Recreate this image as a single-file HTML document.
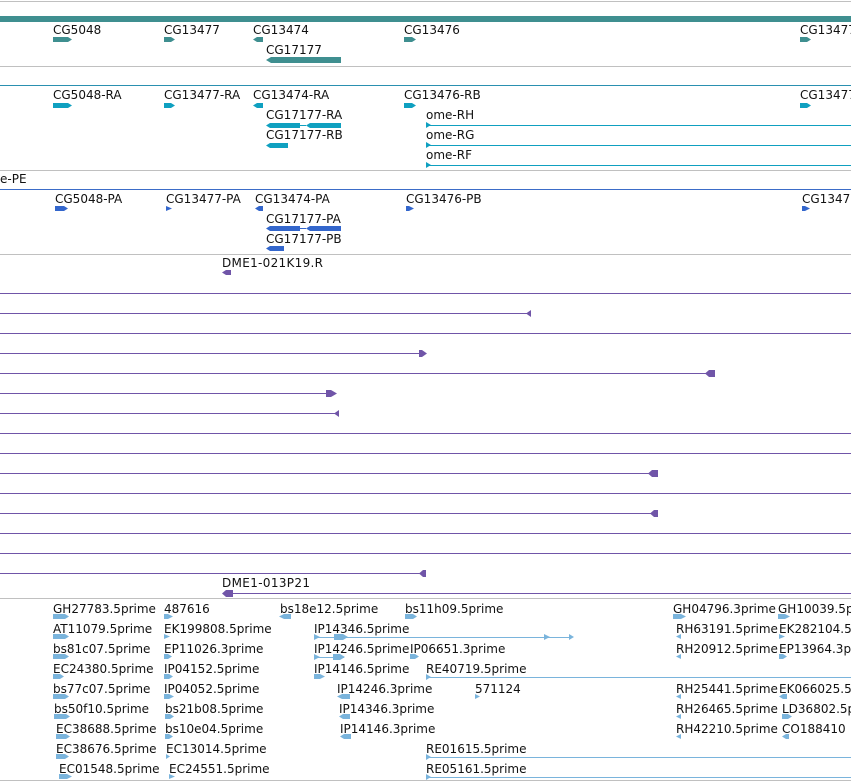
<!DOCTYPE html>
<html><head><meta charset="utf-8"><style>
html,body{margin:0;padding:0;background:#fff;width:851px;height:782px;overflow:hidden}
svg{display:block}
text{font-family:"DejaVu Sans","Liberation Sans",sans-serif;font-size:12px;fill:#111}
</style></head><body>
<svg width="851" height="782" viewBox="0 0 851 782" xmlns="http://www.w3.org/2000/svg">
<g fill="#c0c0c0">
<rect x="0" y="1" width="851" height="1"/>
<rect x="0" y="66" width="851" height="1"/>
<rect x="0" y="170" width="851" height="1"/>
<rect x="0" y="254" width="851" height="1"/>
<rect x="0" y="598" width="851" height="1"/>
<rect x="0" y="780" width="851" height="1"/>
</g>

<g fill="#3f8f90">
<rect x="0" y="16" width="851" height="6"/>
<polygon points="53,37 68,37 72,39.5 68,42 53,42"/>
<polygon points="164,37 171,37 175,39.5 171,42 164,42"/>
<polygon points="263,37 257,37 253,39.5 257,42 263,42"/>
<polygon points="404,37 412,37 416,39.5 412,42 404,42"/>
<polygon points="800,37 807,37 811,39.5 807,42 800,42"/>
<polygon points="341,57 271,57 266,60 271,63 341,63"/>
</g>
<text x="53" y="34">CG5048</text>
<text x="164" y="34">CG13477</text>
<text x="253" y="34">CG13474</text>
<text x="404" y="34">CG13476</text>
<text x="800" y="34">CG13477</text>
<text x="266" y="54">CG17177</text>

<rect x="0" y="85" width="851" height="1" fill="#2a90b0"/>
<g fill="#0fa0c0">
<rect x="53" y="103" width="15" height="5"/><polygon points="68,103 72,105.5 68,108"/>
<polygon points="164,103 171,103 175,105.5 171,108 164,108"/>
<polygon points="263,103 257,103 253,105.5 257,108 263,108"/>
<polygon points="404,103 412,103 416,105.5 412,108 404,108"/>
<polygon points="800,103 807,103 811,105.5 807,108 800,108"/>
<polygon points="300,123 270,123 266,125.5 270,128 300,128"/>
<rect x="300" y="125" width="6" height="1"/>
<polygon points="341,123 310,123 306,125.5 310,128 341,128"/>
<polygon points="288,143 270,143 266,145.5 270,148 288,148"/>
<rect x="426" y="125" width="425" height="1"/><polygon points="426,122 431,125 426,128"/>
<rect x="426" y="145" width="425" height="1"/><polygon points="426,142 431,145 426,148"/>
<rect x="426" y="165" width="425" height="1"/><polygon points="426,162 431,165 426,168"/>
</g>
<text x="53" y="99">CG5048-RA</text>
<text x="164" y="99">CG13477-RA</text>
<text x="253" y="99">CG13474-RA</text>
<text x="404" y="99">CG13476-RB</text>
<text x="800" y="99">CG13477</text>
<text x="266" y="119">CG17177-RA</text>
<text x="266" y="139">CG17177-RB</text>
<text x="426" y="119">ome-RH</text>
<text x="426" y="139">ome-RG</text>
<text x="426" y="159">ome-RF</text>
<text x="0" y="183">e-PE</text>

<rect x="0" y="189" width="851" height="1" fill="#3b6cc8"/>
<g fill="#3366cc">
<rect x="55" y="206" width="9" height="5"/><polygon points="64,206 68,208.5 64,211"/>
<polygon points="166,206 172,208.5 166,211"/>
<polygon points="263,206 259,206 255,208.5 259,211 263,211"/>
<polygon points="406,206 409,206 414,208.5 409,211 406,211"/>
<polygon points="802,206 805,206 810,208.5 805,211 802,211"/>
<polygon points="300,226 270,226 266,228.5 270,231 300,231"/>
<rect x="300" y="228" width="6" height="1"/>
<polygon points="341,226 310,226 306,228.5 310,231 341,231"/>
<polygon points="284,246 270,246 266,248.5 270,251 284,251"/>
</g>
<text x="55" y="203">CG5048-PA</text>
<text x="166" y="203">CG13477-PA</text>
<text x="255" y="203">CG13474-PA</text>
<text x="406" y="203">CG13476-PB</text>
<text x="802" y="203">CG1347</text>
<text x="266" y="223">CG17177-PA</text>
<text x="266" y="243">CG17177-PB</text>

<text x="222" y="267" textLength="101">DME1-021K19.R</text>
<text x="222" y="587" textLength="88">DME1-013P21</text>
<g fill="#7055a8">
<polygon points="231,270 226,270 222,272.5 226,275 231,275"/>
<rect x="0" y="293" width="851" height="1"/>
<rect x="0" y="313" width="530" height="1"/><polygon points="531,310 526,313.5 531,317"/>
<rect x="0" y="333" width="851" height="1"/>
<rect x="0" y="353" width="423" height="1"/><polygon points="419,350 422,350 427,353.5 422,357 419,357"/>
<rect x="0" y="373" width="710" height="1"/><polygon points="715,370 709,370 705,373.5 709,377 715,377"/>
<rect x="0" y="393" width="333" height="1"/><polygon points="326,390 331,390 337,393.5 331,397 326,397"/>
<rect x="0" y="413" width="338" height="1"/><polygon points="339,410 334,413.5 339,417"/>
<rect x="0" y="433" width="851" height="1"/>
<rect x="0" y="453" width="851" height="1"/>
<rect x="0" y="473" width="655" height="1"/><polygon points="658,470 652,470 648,473.5 652,477 658,477"/>
<rect x="0" y="493" width="851" height="1"/>
<rect x="0" y="513" width="655" height="1"/><polygon points="658,510 654,510 650,513.5 654,517 658,517"/>
<rect x="0" y="533" width="851" height="1"/>
<rect x="0" y="553" width="851" height="1"/>
<rect x="0" y="573" width="424" height="1"/><polygon points="426,570 423,570 419,573.5 423,577 426,577"/>
<rect x="226" y="593" width="625" height="1"/><polygon points="233,590 226,590 222,593.5 226,597 233,597"/>
</g>

<g>
<text x="53" y="613">GH27783.5prime</text>
<text x="164" y="613">487616</text>
<text x="280" y="613">bs18e12.5prime</text>
<text x="405" y="613">bs11h09.5prime</text>
<text x="673" y="613">GH04796.3prime</text>
<text x="778" y="613">GH10039.5prime</text>

<text x="53" y="633">AT11079.5prime</text>
<text x="164" y="633">EK199808.5prime</text>
<text x="314" y="633">IP14346.5prime</text>
<text x="676" y="633">RH63191.5prime</text>
<text x="779" y="633">EK282104.5prime</text>

<text x="53" y="653">bs81c07.5prime</text>
<text x="164" y="653">EP11026.3prime</text>
<text x="314" y="653">IP14246.5prime</text>
<text x="410" y="653">IP06651.3prime</text>
<text x="676" y="653">RH20912.5prime</text>
<text x="779" y="653">EP13964.3prime</text>

<text x="53" y="673">EC24380.5prime</text>
<text x="164" y="673">IP04152.5prime</text>
<text x="314" y="673">IP14146.5prime</text>
<text x="426" y="673">RE40719.5prime</text>

<text x="53" y="693">bs77c07.5prime</text>
<text x="164" y="693">IP04052.5prime</text>
<text x="337" y="693">IP14246.3prime</text>
<text x="475" y="693">571124</text>
<text x="676" y="693">RH25441.5prime</text>
<text x="779" y="693">EK066025.5prime</text>

<text x="54" y="713">bs50f10.5prime</text>
<text x="165" y="713">bs21b08.5prime</text>
<text x="339" y="713">IP14346.3prime</text>
<text x="676" y="713">RH26465.5prime</text>
<text x="782" y="713">LD36802.5prime</text>

<text x="56" y="733">EC38688.5prime</text>
<text x="165" y="733">bs10e04.5prime</text>
<text x="340" y="733">IP14146.3prime</text>
<text x="676" y="733">RH42210.5prime</text>
<text x="782" y="733">CO188410</text>

<text x="56" y="753">EC38676.5prime</text>
<text x="166" y="753">EC13014.5prime</text>
<text x="426" y="753">RE01615.5prime</text>

<text x="59" y="773">EC01548.5prime</text>
<text x="169" y="773">EC24551.5prime</text>
<text x="426" y="773">RE05161.5prime</text>
</g>
<g fill="#7ab4dc">
<rect x="53" y="614" width="12" height="5"/><polygon points="65,614 69,616.5 65,619"/>
<polygon points="164,614 168,614 173,616.5 168,619 164,619"/>
<polygon points="291,614 284,614 279,616.5 284,619 291,619"/>
<rect x="405" y="614" width="8" height="5"/><polygon points="413,614 417,616.5 413,619"/>
<polygon points="673,614 681,614 686,616.5 681,619 673,619"/>
<polygon points="778,614 785,614 790,616.5 785,619 778,619"/>
<rect x="53" y="634" width="12" height="5"/><polygon points="65,634 69,636.5 65,639"/>
<polygon points="164,634 170,636.5 164,639"/>
<rect x="314" y="637" width="258" height="1"/><polygon points="314,634 320,637 314,640"/>
<polygon points="334,634 343,634 348,637 343,640 334,640"/>
<polygon points="544,634 550,637 544,640"/><polygon points="569,634 574,637 569,640"/>
<polygon points="681,634 676,636.5 681,639"/>
<polygon points="779,634 785,636.5 779,639"/>
<rect x="53" y="654" width="12" height="5"/><polygon points="65,654 69,656.5 65,659"/>
<polygon points="164,654 168,654 172,656.5 168,659 164,659"/>
<rect x="314" y="657" width="30" height="1"/><polygon points="314,654 320,657 314,660"/>
<polygon points="333,654 340,654 345,657 340,660 333,660"/>
<polygon points="410,654 415,654 419,656.5 415,659 410,659"/>
<polygon points="681,654 676,656.5 681,659"/>
<polygon points="779,654 783,654 787,656.5 783,659 779,659"/>
<rect x="53" y="674" width="7" height="5"/><polygon points="60,674 64,676.5 60,679"/>
<polygon points="164,674 169,674 173,676.5 169,679 164,679"/>
<polygon points="314,674 320,674 325,676.5 320,679 314,679"/>
<rect x="426" y="677" width="425" height="1"/><polygon points="426,674 431,677 426,680"/>
<rect x="53" y="694" width="12" height="5"/><polygon points="65,694 69,696.5 65,699"/>
<polygon points="164,694 169,694 174,696.5 169,699 164,699"/>
<polygon points="350,694 342,694 337,696.5 342,699 350,699"/>
<polygon points="475,694 480,696.5 475,699"/>
<polygon points="681,694 676,696.5 681,699"/>
<polygon points="787,694 783,694 779,696.5 783,699 787,699"/>
<rect x="54" y="714" width="12" height="5"/><polygon points="66,714 70,716.5 66,719"/>
<polygon points="165,714 170,714 174,716.5 170,719 165,719"/>
<polygon points="350,714 343,714 339,716.5 343,719 350,719"/>
<polygon points="681,714 676,716.5 681,719"/>
<polygon points="782,714 788,714 792,716.5 788,719 782,719"/>
<rect x="56" y="734" width="10" height="5"/><polygon points="66,734 70,736.5 66,739"/>
<polygon points="165,734 169,734 173,736.5 169,739 165,739"/>
<polygon points="351,734 344,734 340,736.5 344,739 351,739"/>
<polygon points="681,734 676,736.5 681,739"/>
<polygon points="789,734 786,734 782,736.5 786,739 789,739"/>
<rect x="56" y="754" width="9" height="5"/><polygon points="65,754 69,756.5 65,759"/>
<polygon points="166,754 170,756.5 166,759"/>
<rect x="426" y="757" width="425" height="1"/><polygon points="426,754 431,757 426,760"/>
<polygon points="59,774 67,774 72,776.5 67,779 59,779"/>
<polygon points="169,774 175,776.5 169,779"/>
<rect x="426" y="777" width="425" height="1"/><polygon points="426,774 431,777 426,780"/>
</g>
</svg>
</body></html>
